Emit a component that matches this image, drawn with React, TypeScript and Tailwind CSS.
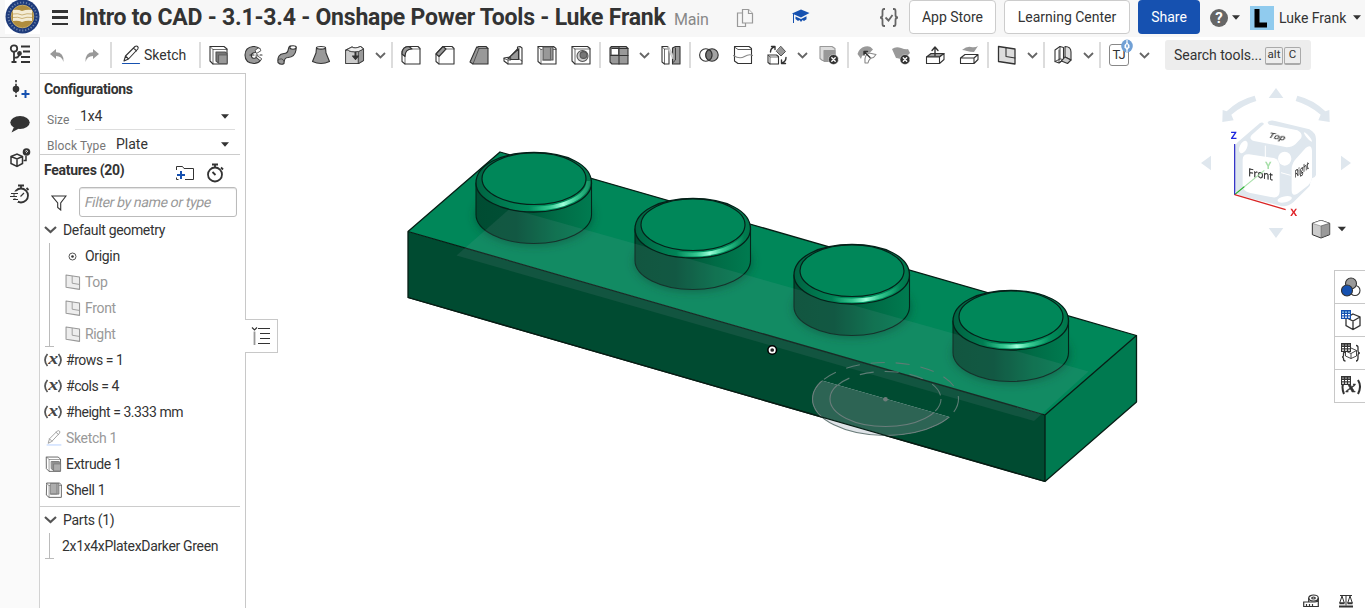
import React from "react";

type Kids = { children?: React.ReactNode; className?: string };

const Icon = ({ children, className = "h-[22px] w-[22px]" }: Kids) => (
  <svg viewBox="0 0 22 22" className={`shrink-0 ${className}`} fill="none" stroke="#333" strokeWidth="1.1" strokeLinejoin="round" strokeLinecap="round">
    {children}
  </svg>
);

const Tool = ({ children }: Kids) => <button className="flex h-full w-[34px] shrink-0 items-center justify-center">{children}</button>;
const Sep = () => (
  <span className="flex h-full w-1 shrink-0 justify-center py-[5px]">
    <span className="w-0.5 bg-[#dcdcdc]" />
  </span>
);
const Chevron = () => (
  <button className="flex h-full w-[18px] shrink-0 items-center justify-center pr-[2px]">
    <svg viewBox="0 0 11 7" className="h-[7px] w-[11px]" fill="none" stroke="#666" strokeWidth="1.8"><path d="M1 1l4.5 4.5L10 1" /></svg>
  </button>
);
const Caret = ({ className = "" }: Kids) => (
  <svg viewBox="0 0 8 5" className={`h-[5px] w-2 shrink-0 ${className}`}><path d="M0 .3h8L4 4.7z" fill="#333" /></svg>
);

const G = "#999";

const ExtrudeIcon = ({ className }: Kids) => (
  <Icon className={className}>
    <path d="M2 2.5h14l3 2.5v15H5l-3-3z" fill="#fff" />
    <path d="M2 2.5L5 5.5V20M5 5.5h14" strokeWidth=".7" />
    <path d="M8 8h9l2 1.5V19h-8.500L8 17z" fill="#777" stroke="#555" />
    <path d="M11 11h8v8.500h-8z" fill="#999" stroke="#555" strokeWidth=".8" />
  </Icon>
);
const ShellIcon = ({ className }: Kids) => (
  <Icon className={className}>
    <path d="M2 4V2.500h15.500l2.500 2V20H5l-3-2.500z" fill="#fff" />
    <path d="M2 3L5 5.500V20M5 5.500h1M16 5.500h4" strokeWidth=".7" />
    <path d="M7 3h10v13H7z" fill={G} stroke="#555" />
    <path d="M7 16h7.500V4" stroke="#666" />
  </Icon>
);
const PlaneIcon = ({ className }: Kids) => (
  <Icon className={className}>
    <path d="M2.500 2.500L19 5V20L2.500 17.500z" fill="#ddd" strokeWidth="1.300" />
    <path d="M10 4v8.500l9 1.500" />
  </Icon>
);
const PencilIcon = ({ className, line = "#1651b0" }: { className?: string; line?: string }) => (
  <Icon className={className}>
    <path d="M4 17l1.500-5L15 2.500q1.500-1 2.600 0t.2 2.500L8.500 15zM5.500 12l3 3M13.500 4l3 2.800" />
    <path d="M2.500 19.500h17" stroke={line} strokeWidth="1.200" />
  </Icon>
);

const Block = ({ d, fill = "#fff" }: { d: string; fill?: string }) => <path d={d} fill={fill} />;

function Toolbar() {
  return (
    <div className="flex h-9 shrink-0 items-stretch bg-white text-[14px] text-[#333]">
      <Tool>
        <svg viewBox="0 0 15 14" className="h-[15px] w-[15px]"><path d="M0 5.500L6 .5v3.300q8 0 7.500 9.700Q12 7.500 6 7.500v3z" fill="#999" /></svg>
      </Tool>
      <button className="flex w-[35px] items-center justify-center">
        <svg viewBox="0 0 15 14" className="h-[15px] w-[15px]"><path d="M15 5.500L9 .5v3.300Q1 3.800 1.500 13.500 3 7.500 9 7.500v3z" fill="#999" /></svg>
      </button>
      <Sep />
      <button className="flex w-[85px] items-center pl-[7px]">
        <PencilIcon />
        <span className="pl-[2px] pt-px">Sketch</span>
      </button>
      <Sep />
      <Tool><ExtrudeIcon /></Tool>
      <Tool>
        <Icon>
          <path d="M18 5Q15 2 11 2.500 3 3.500 3 11q0 8 9 8.500 4 0 6.500-3l-4-3q-4 2-5-1-.7-4 4.500-4z" fill={G} />
          <path d="M18.500 5.500q-.5-2-2.500-1.500L13 6.500l1.500 3 4-2.500zM14 13l4 3.500q1.500 0 1.500-2L15.500 12z" fill="#fff" strokeWidth=".8" />
          <path d="M8 11h4M14 11h2M18 11h2" />
        </Icon>
      </Tool>
      <Tool>
        <Icon>
          <path d="M2 18.500Q1 10 8 9.500c6 0 3-6 6-7.500l6 1v3q-1 7-8 7.500-4 0-4 6-3 2-6-1z" fill={G} />
          <ellipse cx="17" cy="3.500" rx="3.200" ry="1.700" fill="#fff" /><path d="M2 16q4-3 6 1" strokeWidth=".7" />
        </Icon>
      </Tool>
      <Tool>
        <Icon><path d="M6.500 3.500L6 9 2.500 17.500q8.500 4 17 0L16 9l-.5-5.500z" fill={G} /><ellipse cx="11" cy="3.800" rx="4.500" ry="1.300" fill="#fff" /></Icon>
      </Tool>
      <Tool>
        <Icon>
          <path d="M2 6v13.500h12.500l5-3V5L16.500 2.500 14 3.500q-4 1.500-6-.5z" fill="#bbb" />
          <path d="M2 6h2q2 2.500 10.500 1.500V19.500H2z" fill="#ccc" strokeWidth=".8" /><path d="M14.500 7.500l5-2.500v11.500l-5 3z" fill={G} strokeWidth=".7" />
          <path d="M2 6l6-3q3 2 8.500-.5l3 2.500-5 2.500Q5 8.500 4 6z" fill="#eee" strokeWidth=".8" />
          <path d="M11.500 8v5" strokeWidth="2" strokeLinecap="butt" /><path d="M8.500 12l3 3.500 3-3.500z" fill="#333" />
        </Icon>
      </Tool>
      <Chevron />
      <Sep />
      <Tool>
        <Icon><Block d="M2 10q0-7.500 7-7.500h9l2 2V20H5l-3-2.500z" /><path d="M2 10q0-7.500 7-7.500l3 2.500q-7 0-7 7.500z" fill={G} /><path d="M5 12.500V20M12 5h8" strokeWidth=".7" /></Icon>
      </Tool>
      <Tool>
        <Icon><Block d="M2 10L9 2.500h9l2 2V20H5l-3-2.500z" /><path d="M2 10L9 2.500l3 2.500-7 7.500z" fill={G} /><path d="M5 12.500V20M12 5h8" strokeWidth=".7" /></Icon>
      </Tool>
      <Tool>
        <Icon><path d="M2 18L8.500 3.500l2-1H18l2 2V20H5z" fill={G} /><path d="M5 20l6-15.500h9M8.500 3l2.500 1.500" strokeWidth=".7" /></Icon>
      </Tool>
      <Tool>
        <Icon><path d="M2 14l6-1L15.500 5V3l2.500-.5 2 1.500V20H6l-4-3z" fill="#fff" /><path d="M6 14.500L16.500 5v10.500H9z" fill={G} /><path d="M2 14.500L6 16h3l-.5-3M6 16v4M17 4v11l3 2" strokeWidth=".8" /></Icon>
      </Tool>
      <Tool><ShellIcon /></Tool>
      <Tool>
        <Icon><Block d="M2 2.500h15.500l2.500 2V20H5l-3-3z" /><path d="M2 3l3 2v15M5 5h15" strokeWidth=".7" /><circle cx="12.500" cy="12" r="5.500" fill="#ccc" stroke="#555" /><circle cx="13.500" cy="11" r="3.400" fill="#777" stroke="#555" /></Icon>
      </Tool>
      <Sep />
      <Tool>
        <Icon>
          <path d="M2 4l1.500-1.500H18L20 4.500V20H4l-2-2z" fill={G} /><path d="M3.500 4h7v7h-7z" fill="#fff" strokeWidth=".7" /><path d="M11 3v17M2.500 11.500H20M4 4.500h16" />
        </Icon>
      </Tool>
      <Chevron />
      <Tool>
        <Icon><path d="M2 2.500h5.500L9 4.500V20H4.500L2 18z" fill="#fff" /><path d="M2 3l2.500 2v15M4.500 5H9" strokeWidth=".7" /><path d="M12.500 4l3-1.500H20V20h-7.500z" fill={G} /><path d="M15.500 4v12l-3 3" strokeWidth=".9" /><path d="M8.500 2.500L13 11v4L8.500 6z" fill="#ddd" stroke="#bbb" strokeWidth=".8" /></Icon>
      </Tool>
      <Sep />
      <Tool>
        <Icon><circle cx="7.800" cy="11" r="6.200" /><circle cx="14" cy="11" r="6.200" fill={G} fillOpacity=".9" /><path d="M10.900 5.600a6.200 6.200 0 0 1 0 10.800 6.200 6.200 0 0 1 0-10.800z" fill="#777" /></Icon>
      </Tool>
      <Tool>
        <Icon><Block d="M2.500 2.500h14.500l2.500 2V19.500H6L2.500 17z" /><path d="M2.500 3L6 5.500h13.500" strokeWidth=".8" /><path d="M1.500 11.500q6 4 11 1t8-1" stroke="#888" /></Icon>
      </Tool>
      <Tool>
        <Icon>
          <path d="M2 11h8.500l2 1.500V20H4l-2-1.500z" fill="#fff" /><path d="M2 11l2 2h8.500M4 13v7" strokeWidth=".7" /><path d="M15 2.500l4.500 5-4.500 4.500-4.500-4.500z" fill={G} strokeWidth=".8" />
          <path d="M4.500 8q0-3.500 3.500-5M5.500 2.500h3.500v3M20 13.500q0 4-4 5.500M15.500 16v3.500h4" strokeWidth="1.400" />
        </Icon>
      </Tool>
      <Chevron />
      <Tool>
        <Icon><path d="M2 2.500h12l3 2v12H4.500L2 14.500z" fill="#ddd" stroke="#999" /><path d="M6 6.500h11v11H6z" fill={G} stroke="#999" /><circle cx="15.500" cy="15.500" r="5" fill="#333" stroke="#fff" strokeWidth=".5" /><path d="M13.800 13.800l3.400 3.400m0-3.400l-3.400 3.400" stroke="#fff" strokeWidth="1.400" /></Icon>
      </Tool>
      <Sep />
      <Tool>
        <Icon><path d="M1.500 10Q3 4 9 2.500q5-1.500 8 3l-3 3Q6 9 5 15z" fill={G} stroke="none" /><path d="M9 19q-1-8 4-10l7 1.500-2.500 3Q13 14 12 19z" fill="#fff" stroke="#888" /><path d="M14 13.500L8.500 8M8 11V7.500h3.500" strokeWidth="1.400" /></Icon>
      </Tool>
      <Tool>
        <Icon><path d="M2 5q4-3 9-1t7 1l2 4-8 8q-2-3-6-3z" fill={G} stroke="none" /><circle cx="15" cy="15.500" r="5" fill="#333" stroke="#fff" strokeWidth=".5" /><path d="M13.300 13.800l3.400 3.400m0-3.400l-3.400 3.400" stroke="#fff" strokeWidth="1.400" /></Icon>
      </Tool>
      <Tool>
        <Icon><path d="M2.500 13L7 9.500h13L15.500 13z" fill={G} /><path d="M2.500 13h13v6.500h-13zM15.500 13L20 9.500v6l-4.500 4z" fill="#fff" /><path d="M11 11.500V4M8 6.500l3-3.500 3 3.500" strokeWidth="1.400" /></Icon>
      </Tool>
      <Tool>
        <Icon><path d="M4 6q5-4 9-3 4 1 7-1l-4 6q-4 0-7-1t-5-1z" fill={G} stroke="none" /><path d="M2.500 14L7 10.500h13L16 14zM2.500 14H16v5.500H2.500zM16 14l4-3.500v5l-4 4z" fill="#fff" /></Icon>
      </Tool>
      <Sep />
      <Tool><PlaneIcon /></Tool>
      <Chevron />
      <Sep />
      <Tool>
        <Icon><path d="M3 6l5-3.500 3.500 1v12L7 19l-4-1.500z" fill="#fff" /><path d="M8 2.500v12.500l-5 2.500M8 15l3.500.5L7 19V6" strokeWidth=".9" /><path d="M13 2.500q6 0 6 5.500v8l-6-3z" fill="#ddd" /><path d="M13 13l6 3-3.500 3.500-6-2.500z" fill="#ccc" /></Icon>
      </Tool>
      <Chevron />
      <Sep />
      <Tool>
        <span className="relative flex h-[22px] w-[20px] items-center justify-center rounded-[3px] border border-[#888] pb-px text-[13px] leading-none tracking-[-0.3px]">
          TJ
          <svg viewBox="0 0 12 14" className="absolute -right-[5px] -top-[6px] h-[14px] w-[12px]"><ellipse cx="6" cy="7" rx="5.800" ry="6.500" fill="#70a0d5" /><path d="M6 1v12" stroke="#fff" strokeWidth="1.200" /><path d="M6 3.500L8.500 6v2.500L6 11 3.500 8.500V6z" fill="#fff" /><path d="M6 5.500v3" stroke="#70a0d5" strokeWidth="1.600" /></svg>
        </span>
      </Tool>
      <Chevron />
      <div className="ml-[11px] mt-[3px] flex h-[30px] w-[146px] items-center rounded-[3px] bg-[#ededed] pl-[9px] text-[14px]">
        <span className="w-[91px] whitespace-nowrap pt-px tracking-[-0.05px]">Search tools...</span>
        <span className="mt-px flex h-[18px] w-[18px] items-center justify-center rounded-[2px] border border-b-2 border-[#aaa] text-[11.500px]">alt</span>
        <span className="ml-px mt-px flex h-[18px] w-[17px] items-center justify-center rounded-[2px] border border-b-2 border-[#aaa] text-[11.500px]">C</span>
      </div>
    </div>
  );
}

function Header() {
  return (
    <header className="flex h-[37px] shrink-0 bg-[#f7f7f7] text-[#333]">
      <div className="ml-[5px] h-[34px] w-[35px] bg-white">
        <svg viewBox="0 0 35 34" className="h-[34px] w-[35px]">
          <circle cx="17.500" cy="16.500" r="17" fill="#1f3c7c" />
          <circle cx="17.500" cy="16.500" r="14" fill="none" stroke="#6d83aa" strokeWidth="1.800" strokeDasharray="1.200 1.800" />
          <circle cx="17.500" cy="16.500" r="11.300" fill="#b08d3e" stroke="#c6ab66" />
          <path d="M8 10q5-1 9 1 5-2 10-1v11q-5-1-10 1-4-2-9-1z" fill="#f4ecd5" />
          <path d="M8 14q5-1 9 1 5-2 10-1M8 17.500q5-1 9 1 5-2 10-1" stroke="#cbb277" fill="none" />
        </svg>
      </div>
      <div className="ml-3 mt-[10px] flex h-[15px] w-4 flex-col justify-between">
        <i className="h-[2.500px] bg-[#333]" /><i className="h-[2.500px] bg-[#333]" /><i className="h-[2.500px] bg-[#333]" />
      </div>
      <h1 className="ml-[11px] mt-[3px] w-[595px] whitespace-nowrap text-[23px] font-bold leading-[30px] tracking-[-0.22px]">Intro to CAD - 3.1-3.4 - Onshape Power Tools - Luke Frank</h1>
      <span className="mt-[7px] w-[62px] text-[16px] leading-[26px] tracking-[-0.2px] text-[#888]">Main</span>
      <svg viewBox="0 0 18 20" className="mt-2 h-5 w-[18px]" fill="#f7f7f7" stroke="#999" strokeWidth="1.200"><path d="M1.500 5h8v13.500h-8z" /><path d="M6.500 1.500h6l4 4V15h-10z" /><path d="M12.500 1.500v4h4" /></svg>
      <svg viewBox="0 0 18 16" className="ml-[38px] mt-[9px] h-4 w-[18px]" fill="#1651b0"><path d="M0 4.500L9 .5l8.500 3.500L9 8.500z" /><path d="M3.500 7.500L9 10l5.500-2.700v3L12 12l-1.500-1L9 13l-1.500-2L6 12l-2.500-2z" /><path d="M1.500 5v9" stroke="#1651b0" /></svg>
      <svg viewBox="0 0 20 20" className="ml-[69px] mt-2 h-5 w-5" fill="none" stroke="#666" strokeWidth="1.800"><path d="M6 1H5Q3.500 1 3.500 3v4Q3.500 9.500 1 9.500q2.500 0 2.500 2.500v4q0 2 1.500 2h1M14 1h1q1.500 0 1.500 2v4q0 2.500 2.500 2.500-2.500 0-2.500 2.500v4q0 2-1.500 2h-1M6.500 9.500l3 3 4-5.500" /></svg>
      <button className="ml-[10px] h-[34px] w-[87px] rounded-[4px] border border-[#ccc] bg-white pt-px text-[14px]">App Store</button>
      <button className="ml-2 h-[34px] w-[126px] rounded-[4px] border border-[#ccc] bg-white pt-px text-[14px]">Learning Center</button>
      <button className="ml-2 h-[34px] w-[62px] rounded-[4px] bg-[#1651b0] pt-px text-[14px] text-white">Share</button>
      <span className="ml-[10px] mt-[9px] flex h-[18px] w-[18px] items-center justify-center rounded-full bg-[#666] text-[15px] font-bold text-white">?</span>
      <Caret className="ml-[4px] mt-[15px]" />
      <span className="ml-[10px] mt-[6px] flex h-6 w-6 bg-[#90cbee]"><svg viewBox="0 0 24 24" className="h-6 w-6"><path d="M7 3v16h10" stroke="#000" strokeWidth="5" fill="none" /></svg></span>
      <span className="ml-[5px] mt-[8px] w-[74px] whitespace-nowrap text-[14px] leading-5">Luke Frank</span>
      <Caret className="mt-[15px]" />
    </header>
  );
}

function Rail() {
  return (
    <nav className="flex w-10 shrink-0 flex-col items-center border-r border-t border-[#d2d2d2] bg-[#fafafa] pt-px">
      <div className="flex h-[30px] items-center"><svg viewBox="0 0 22 20" className="h-5 w-[22px]" fill="none" stroke="#333" strokeWidth="1.800"><circle cx="5" cy="4.500" r="3.200" /><path d="M5 8v10.500M2.500 18h5M5 13.500q5 1 5.500-4M12 2.500h9M14 7.500h7M12 13h9M12 18h9" /><circle cx="10.500" cy="9.500" r="1.500" fill="#333" /></svg></div>
      <div className="mt-[3px] flex h-9 items-center"><svg viewBox="0 0 20 20" className="h-5 w-5"><circle cx="6" cy="9" r="3.300" fill="#333" /><path d="M6 0v18" stroke="#333" strokeWidth="1.600" strokeDasharray="2.200 1.500" /><path d="M11.500 14h8M15.500 10v8" stroke="#1651b0" strokeWidth="2" /></svg></div>
      <div className="flex h-8 items-center"><svg viewBox="0 0 20 18" className="h-[18px] w-5"><ellipse cx="10" cy="7.500" rx="9.700" ry="6.500" fill="#333" /><path d="M4 12l-2.500 5.500L9 13.500z" fill="#333" /></svg></div>
      <div className="flex h-9 items-center"><svg viewBox="0 0 22 20" className="h-5 w-[22px]" fill="none" stroke="#333" strokeWidth="1.500"><path d="M2 8.500l6-2.500 5.500 2.500v7L8 18.500l-6-3zM2 8.500L8 11l5.500-2.500M8 11v7.500" /><circle cx="17.500" cy="4" r="3.800" fill="#333" stroke="none" /><path d="M17 8v4.500h-2.500" /><path d="M16.300 3.300q1.200-1.500 2.200-.3 0 1-1 1.500v.6" stroke="#fff" strokeWidth=".9" /></svg></div>
      <div className="flex h-9 items-center"><svg viewBox="0 0 20 20" className="h-5 w-5" fill="none" stroke="#333" strokeWidth="1.800"><circle cx="11" cy="11.500" r="7" /><path d="M8 1.500h6M11 2v2.500M16.500 4l2 2" /><path d="M0 13h8M2 9h6M1.500 16.500H8" stroke="#fafafa" strokeWidth="3" /><path d="M1 9.500h7M0 12.500h7M3 15.500h5M10.500 12.500l3.500-3.500" strokeWidth="1.200" /></svg></div>
    </nav>
  );
}

const Row = ({ children, className = "" }: Kids) => <div className={`flex h-[26px] shrink-0 items-center whitespace-nowrap tracking-[-0.33px] ${className}`}>{children}</div>;
const Label = ({ children }: Kids) => <span className="pt-px">{children}</span>;
const Plane = ({ name }: { name: string }) => (
  <Row className="pl-[14px] text-[#999]"><PlaneIcon className="mr-[3px] h-[18px] w-[18px] opacity-50" /><Label>{name}</Label></Row>
);
const Variable = ({ children }: Kids) => (
  <Row className="pl-1">
    <svg viewBox="0 -5 24 24" className="-mr-[2px] h-6 w-6 shrink-0" fill="#444"><path d="M3.500 1q-5 6 0 12M14.500 1q5 6 0 12" fill="none" stroke="#555" strokeWidth="1.700" /><text x="4.300" y="10.500" fontSize="16" fontWeight="bold" fontStyle="italic" textLength="9.500" lengthAdjust="spacingAndGlyphs" fontFamily="Liberation Serif, serif">x</text></svg>
    <span className="pt-px tracking-[-0.45px]">{children}</span>
  </Row>
);
const GroupChevron = () => <svg viewBox="0 0 13 8" className="ml-1 mr-[6px] h-2 w-[13px]" fill="none" stroke="#555" strokeWidth="2.200"><path d="M1 1l5.500 5L12 1" /></svg>;

function Panel() {
  return (
    <aside className="flex w-[206px] shrink-0 flex-col border-r border-t border-[#c8c8c8] bg-white text-[14px] text-[#333]">
      <section className="mr-[5px] h-[81px] shrink-0 border-b border-[#ccc] pl-1">
        <h2 className="h-8 text-[14px] font-bold leading-[31px] tracking-[-0.33px]">Configurations</h2>
        <div className="flex h-6 pl-[3px]"><span className="w-7 pt-[4px] text-[12px] leading-5 text-[#777]">Size</span><span className="flex w-[160px] items-center justify-between border-b border-[#ddd] pb-[2px] pl-[5px] pr-[6px] tracking-[-0.2px]">1x4<Caret /></span></div>
        <div className="flex h-6 pl-[3px]"><span className="w-[64px] whitespace-nowrap pt-[6px] text-[12px] leading-5 tracking-[0.1px] text-[#777]">Block Type</span><span className="flex h-[28px] w-[124px] items-center justify-between pl-[5px] pr-[6px]">Plate<Caret /></span></div>
      </section>
      <div className="flex h-8 shrink-0 items-center pl-1">
        <h2 className="w-[131px] pb-px text-[14px] font-bold tracking-[-0.3px]">Features (20)</h2>
        <svg viewBox="0 0 20 16" className="mt-1 h-4 w-5" fill="none" stroke="#333"><path d="M1.500 5V1.500h6l1.500 2h9.500v11H10M1.500 12.500v2h2" /><path d="M2 10h8M6 6v8" stroke="#1651b0" strokeWidth="2" /></svg>
        <svg viewBox="0 0 18 20" className="ml-[11px] mt-1 h-5 w-[18px]" fill="none" stroke="#333" strokeWidth="1.800"><circle cx="9" cy="11.500" r="7" /><path d="M6 1.500h6M9 2v3M15 4.500l2 2M9.500 12L6.500 9" /></svg>
      </div>
      <div className="flex h-[30px] shrink-0 items-center">
        <svg viewBox="0 0 16 16" className="ml-[11px] mt-px h-4 w-4" fill="none" stroke="#333" strokeWidth="1.100"><path d="M1 1h14L9.700 8v7l-3-2.500V8z" /></svg>
        <div className="ml-3 flex h-[30px] w-[158px] items-center rounded-[3px] border border-[#bbb] pl-[5px] shadow-[inset_0_1px_1px_rgba(0,0,0,.12)]">
          <span className="-skew-x-12 pt-px tracking-[-0.35px] text-[#999]">Filter by name or type</span>
        </div>
      </div>
      <Row><GroupChevron /><Label>Default geometry</Label></Row>
      <div className="relative ml-[9px] h-[104px] shrink-0 border-l border-[#bbb] before:absolute before:-left-[5px] before:bottom-0 before:h-px before:w-[9px] before:bg-[#bbb]">
        <Row className="pl-[18px]"><svg viewBox="0 0 9 9" className="mr-[8px] h-[9px] w-[9px]"><circle cx="4.500" cy="4.500" r="3.500" fill="none" stroke="#555" /><circle cx="4.500" cy="4.500" r="1.300" fill="#333" /></svg><Label>Origin</Label></Row>
        <Plane name="Top" /><Plane name="Front" /><Plane name="Right" />
      </div>
      <Variable>#rows = 1</Variable>
      <Variable>#cols = 4</Variable>
      <Variable>#height = 3.333 mm</Variable>
      <Row className="pl-[5px] text-[#999]"><PencilIcon className="mr-[3px] h-[18px] w-[18px] opacity-50" line="#6fa0ff" /><Label>Sketch 1</Label></Row>
      <Row className="pl-[5px]"><ExtrudeIcon className="mr-[3px] h-[18px] w-[18px] opacity-80" /><Label>Extrude 1</Label></Row>
      <Row className="pl-[5px]"><ShellIcon className="mr-[3px] h-[18px] w-[18px] opacity-80" /><Label>Shell 1</Label></Row>
      <div className="mr-[5px] h-1 shrink-0 border-b border-[#ccc]" />
      <Row><GroupChevron /><Label>Parts (1)</Label></Row>
      <div className="relative ml-[9px] h-[26px] border-l border-[#bbb] before:absolute before:-left-[5px] before:bottom-0 before:h-px before:w-[9px] before:bg-[#bbb]">
        <Row className="pl-3"><Label>2x1x4xPlatexDarker Green</Label></Row>
      </div>
    </aside>
  );
}

const studs = [0, 1, 2, 3];
const shineCenters = [563, 551, 548, 540];
const sheet = "456.500,255.500 510,208.500 1088.500,371.500 1034,421";

function Brick() {
  return (
    <svg viewBox="246 73 1119 535" className="block h-[535px] w-[1119px]" strokeLinejoin="round">
      <defs>
        <linearGradient id="body"><stop offset="0" stopColor="#004c32" /><stop offset=".35" stopColor="#004f35" /><stop offset=".7" stopColor="#006c46" /><stop offset="1" stopColor="#007b50" /></linearGradient>
        <linearGradient id="rim"><stop offset="0" stopColor="#006341" /><stop offset=".25" stopColor="#007b51" /><stop offset=".6" stopColor="#009461" /><stop offset=".85" stopColor="#008a59" /><stop offset="1" stopColor="#007349" /></linearGradient>
        {studs.map((i) => (
          <linearGradient key={i} id={`shine${i}`} gradientUnits="userSpaceOnUse" x1={shineCenters[i] - 34} x2={shineCenters[i] + 34} y1="0" y2="0">
            <stop offset="0" stopColor="#4be0a6" stopOpacity="0" /><stop offset=".3" stopColor="#4be0a6" stopOpacity=".7" /><stop offset=".5" stopColor="#a0ffdc" /><stop offset=".7" stopColor="#4be0a6" stopOpacity=".7" /><stop offset="1" stopColor="#4be0a6" stopOpacity="0" />
          </linearGradient>
        ))}
        <filter id="soft" x="-20%" y="-30%" width="140%" height="160%"><feGaussianBlur stdDeviation="4" /></filter>
        <filter id="glow" x="-20%" y="-80%" width="140%" height="260%"><feGaussianBlur stdDeviation=".7" /></filter>
        <clipPath id="low"><path d="M780 368.500L1000 431.500V460H780z" /></clipPath>
        <clipPath id="front"><path d="M408 231L1045 415V481.500L408 297.500z" /></clipPath>
        <clipPath id="top"><path d="M408 231.500L500 152 1136.500 335.500 1045 415z" /></clipPath>
        <clipPath id="high"><path d="M780 368.500L1000 431.500V340H780z" /></clipPath>
      </defs>
      <path d="M408 231.500L500 152 1136.500 335.500 1045 415z" fill="#008759" />
      <path d="M408 231.500L1045 415V481.500L408 297.500z" fill="#004b31" />
      <path d="M1045 415L1136.500 335.500V402L1045 481.500z" fill="#007a50" />
      <g clipPath="url(#top)">
        {studs.map((i) => <ellipse key={i} cx={534 + i * 159} cy={216 + i * 46} rx="59" ry="30" fill="#00452e" fillOpacity=".55" filter="url(#soft)" />)}
      </g>
      <g fill="none" stroke="#061d14" strokeWidth="1.300">
        <path d="M408 231.500L500 152 1136.500 335.500 1045 415zM408 231.500V297.500L1045 481.500 1136.500 402V335.500M1045 415V481.500" />
      </g>
      {studs.map((i) => (
        <path key={i} transform={`translate(${i * 159} ${i * 46})`} d="M476 183v31.500a57.750 29 0 0 0 115.500 0V183z" fill="url(#body)" stroke="#04251a" strokeWidth="1.100" />
      ))}
      <polygon points={sheet} fill="#b4b4c8" fillOpacity=".1" />
      {studs.map((i) => (
        <g key={i} transform={`translate(${i * 159} ${i * 46})`}>
          <path d="M476 183C476 165 501 152.500 534 152.500S591.500 165 591.500 183a57.750 29 0 0 1-115.500 0z" fill="url(#rim)" />
          <path d="M479 181a54.750 27.500 0 0 0 109.500 0" fill="none" stroke={`url(#shine${i})`} strokeWidth="4" filter="url(#glow)" />
          <path d="M476 183C476 165 501 152.500 534 152.500S591.500 165 591.500 183a57.750 29 0 0 1-115.500 0z" fill="none" stroke="#052119" strokeWidth="1.300" />
          <ellipse cx="534" cy="178.700" rx="52" ry="25.800" fill="#008759" stroke="#052119" strokeWidth="1.200" />
        </g>
      ))}
      <g clipPath="url(#low)">
        <ellipse cx="885.500" cy="399" rx="73" ry="36.500" fill="#dfe3e8" />
        <g clipPath="url(#front)"><ellipse cx="885.500" cy="399" rx="73" ry="36.500" fill="#2d6454" /></g>
        <g fill="none" stroke="#6b7d7b" strokeWidth="1.100"><ellipse cx="885.500" cy="399" rx="73" ry="36.500" /><ellipse cx="885.500" cy="399" rx="55.500" ry="27.500" /></g>
      </g>
      <g clipPath="url(#high)" fill="none" stroke="#5c7c74" strokeWidth="1.100" strokeDasharray="14 11"><ellipse cx="885.500" cy="399" rx="73" ry="36.500" /><ellipse cx="885.500" cy="399" rx="55.500" ry="27.500" /></g>
      <path d="M408 297.500L1045 481.500" stroke="#061d14" strokeWidth="1.200" />
      <circle cx="885.500" cy="399.300" r="2.300" fill="#6f7d7b" />
      <circle cx="772.200" cy="350" r="3.300" fill="#222" stroke="#000" strokeWidth="3.600" /><circle cx="772.200" cy="350" r="2.700" fill="#222" stroke="#fff" strokeWidth="1.700" />
    </svg>
  );
}

function ViewCube() {
  const c = "#dfe7ee";
  return (
    <svg viewBox="0 0 555 510" className="absolute right-0 top-[2px] h-[170px] w-[185px] font-['Open_Sans',sans-serif]" textRendering="geometricPrecision">
      <g fill={c}>
        <path d="M288 39l22 30h-44zM288 489l22-30h-44zM63 264l30-22v44zM513 264l-30-22v44z" />
        <path d="M224 62l5 16Q188 90 154 119l7 17-34 5 1-36 12 4q35-35 84-47zM352 62l-5 16q41 12 75 41l-7 17 34 5-1-36-12 4q-35-35-84-47z" />
        <path d="M178 197L240 144Q248 140 252 147L215 180Q205 192 222 198L320 217Q336 217 346 208L363 190Q370 176 352 166L268 149Q258 142 268 138 276 135 285 138L388 163Q408 174 408 192V300Q406 308 396 310L390 326Q392 332 384 338L340 382Q320 398 300 392L182 362Q163 355 163 335V225Q163 208 178 197z" />
      </g>
      <path d="M207 238L282 249Q299 255 299 277V349Q298 370 278 367L208 353Q188 348 188 330V254Q188 237 207 238z" fill="#fff" />
      <path d="M348 251L377 219Q394 206 396 227V309Q395 321 385 331L352 356Q335 366 335 346V280Q336 264 348 251z" fill="#fff" />
      <g fill="#fff"><ellipse cx="314" cy="251" rx="20" ry="21" /><ellipse cx="190" cy="216" rx="11" ry="20" transform="rotate(25 190 216)" /><ellipse cx="314" cy="373" rx="22" ry="9" transform="rotate(-12 314 373)" /><ellipse cx="384" cy="186" rx="4" ry="18" transform="rotate(-40 384 186)" /></g>
      <path d="M256 212v34M303 293l29 8" stroke="#fff" strokeWidth="3" />
      <g fill="#222" stroke="#222" strokeWidth=".8" opacity=".98">
        <text transform="matrix(.98 .18 -.45 .72 263 189)" fontSize="28">Top</text>
        <text transform="matrix(.92 .16 0 1 205 303)" fontSize="32">Front</text>
        <text transform="matrix(.62 -.42 0 1.050 344 309)" fontSize="29">Right</text>
      </g>
      <g fill="none" strokeWidth="3.500"><path d="M164 359L253 286" stroke="#a7dfa9" /><path d="M164 359L193 335" stroke="#27b12c" /><path d="M164 207V359" stroke="#2424c5" /><path d="M164 359L317 404" stroke="#d92323" /></g>
      <g fontSize="31" fontWeight="700"><text x="152" y="192" fill="#1d27df">Z</text><text x="255" y="281" fill="#a7dfa9">Y</text><text x="331" y="423" fill="#e02329">X</text></g>
      <g stroke="#333" strokeWidth="3" strokeLinejoin="round"><path d="M397 445l26-9 26 9v34l-26 10-26-10z" fill="#ccc" /><path d="M397 445l26 8 26-8-26-9z" fill="#fff" strokeWidth="1" /><path d="M423 453v35l26-10v-33z" fill="#999" strokeWidth="1" /></g>
      <path d="M473 455h25l-12 14z" fill="#333" />
    </svg>
  );
}

const Table = ({ color, cell }: { color: string; cell: string }) => (
  <g><path d="M0 0h10v9H0z" fill={color} /><path d="M1 1.500h2v1.300H1zM4 1.500h2v1.300H4zM7 1.500h2v1.300H7z" fill={cell} /><path d="M1 4h2v1.300H1zM4 4h2v1.300H4zM7 4h2v1.300H7zM1 6.500h2v1.300H1zM4 6.500h2v1.300H4zM7 6.500h2v1.300H7z" fill="#fff" /></g>
);
const SideTab = ({ children }: Kids) => (
  <button className="flex h-[33px] w-[30px] items-center border-b border-[#c8c8c8] pl-[6px]"><svg viewBox="0 0 20 21" className="h-[21px] w-5 shrink-0" fill="none" stroke="#333" strokeWidth="1.100">{children}</svg></button>
);

export default function App() {
  return (
    <div className="flex h-[608px] w-[1365px] flex-col overflow-hidden bg-white font-['Roboto',sans-serif]">
      <Header />
      <div className="flex min-h-0 flex-1">
        <Rail />
        <div className="flex min-w-0 flex-1 flex-col">
          <Toolbar />
          <div className="flex min-h-0 flex-1">
            <Panel />
            <main className="relative min-w-0 flex-1">
              <Brick />
              <ViewCube />
              <button className="absolute -left-px top-[246px] flex h-[34px] w-[33px] items-center justify-center border border-l-0 border-[#c8c8c8] bg-white">
                <svg viewBox="0 0 20 20" className="h-5 w-5" fill="none" stroke="#333" strokeWidth="1.200"><path d="M7 2.500h12M9 7.500h10M9 12.500h10M7 17.500h12" /><path d="M1 1.500L3.500 4 6 1.500" /><path d="M3.500 5.500V19" stroke="#999" strokeWidth="1.800" /></svg>
              </button>
              <div className="absolute right-0 top-[197px] flex w-[31px] flex-col border-l border-t border-[#c8c8c8] bg-white">
                <SideTab><circle cx="14" cy="13.500" r="5" fill="#fff" /><circle cx="10" cy="6.500" r="5.500" fill="#999" /><circle cx="6" cy="13.500" r="5.500" fill="#1651b0" /></SideTab>
                <SideTab><path d="M12 4l7 3v8.500l-7 4-7-4V8zM5 7.500l7 3.500 7-4M12 11v8" strokeWidth="1.300" /><g stroke="none"><Table color="#1651b0" cell="#90cbee" /></g></SideTab>
                <SideTab><path d="M10 5l5.500 2.500v5.500L10 15.500 4.500 13V8l5.500 2.500 5.500-3M10 10.500v5" strokeWidth=".9" /><path d="M5 9H4Q2.500 9 2.500 11v1.500Q2.500 14 1 14q1.500 0 1.500 1.500v.5q0 2 2 2M15 2.500q2 0 2 2V8q0 1.800 1.800 2-1.800.2-1.800 2v3q0 3-2 3" strokeWidth="1.300" /><g stroke="none"><Table color="#333" cell="#999" /></g></SideTab>
                <SideTab><path d="M3 5q-3 6 0 13M17 4q4 6.500 0 14" strokeWidth="2" /><text x="5" y="15.500" fontSize="17" fontWeight="bold" fontStyle="italic" fill="#333" stroke="#333" strokeWidth=".4" textLength="10" lengthAdjust="spacingAndGlyphs" fontFamily="Liberation Serif, serif">x</text><g stroke="none"><Table color="#333" cell="#999" /></g></SideTab>
              </div>
              <div className="absolute bottom-0 right-3 flex gap-5">
                <svg viewBox="0 0 16 14" className="h-[14px] w-4" fill="none" stroke="#333" strokeWidth="1.200"><ellipse cx="10.500" cy="4" rx="4.800" ry="3" /><ellipse cx="10.500" cy="4" rx="1.800" ry="1" /><path d="M5.700 4v4M15.300 4v8.500H.7V8h11q3.600 0 3.600-4M3.500 12v-2M6.500 12v-2M9.500 12v-2" /></svg>
                <svg viewBox="0 0 14 14" className="h-[14px] w-[14px]" fill="none" stroke="#333" strokeWidth="1"><path d="M1 1.500h12M7 1v10.500M3 2L.7 9h4.600zM11 2L8.700 9h4.600z" /><path d="M.5 9.300h5M8.500 9.300h5M0 12.500h14" strokeWidth="1.800" /></svg>
              </div>
            </main>
          </div>
        </div>
      </div>
    </div>
  );
}
